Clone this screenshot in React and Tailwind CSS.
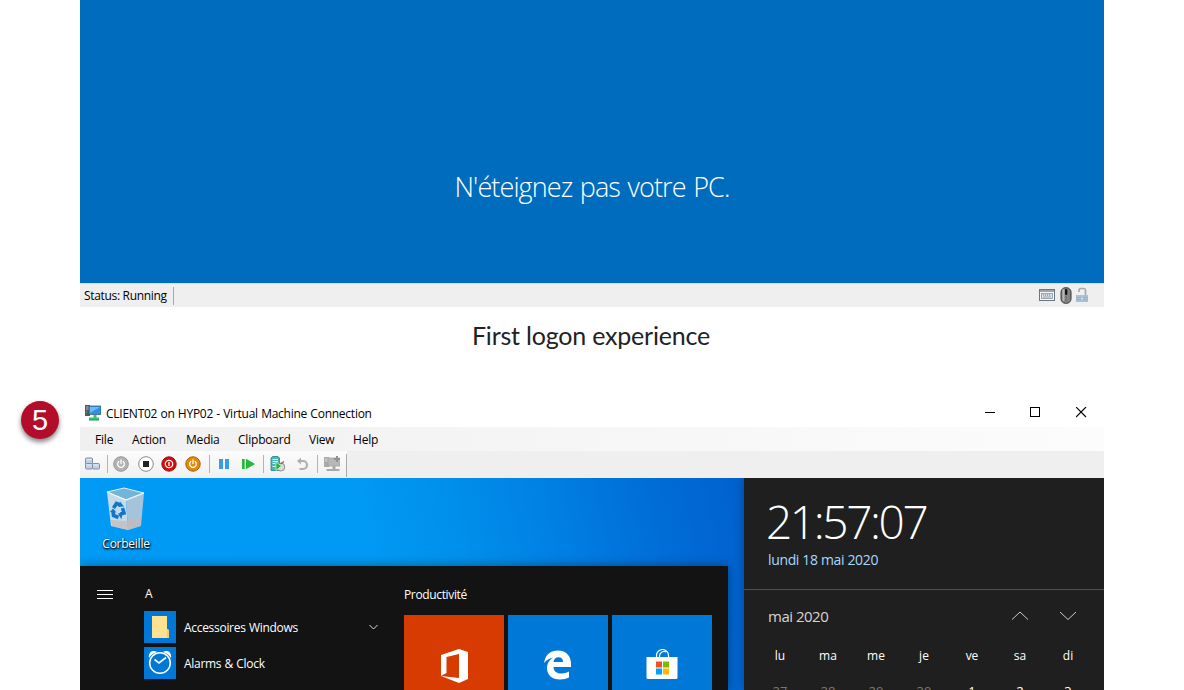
const MENU = [
  ['File', 'w-[37px]'],
  ['Action', 'w-[54px]'],
  ['Media', 'w-[52px]'],
  ['Clipboard', 'w-[71px]'],
  ['View', 'w-[44px]'],
  ['Help', 'w-[40px]'],
];

const DAYS = ['lu', 'ma', 'me', 'je', 've', 'sa', 'di'];
const DATES = [27, 28, 29, 30, 1, 2, 3];

function PowerGlyph() {
  return (
    <g fill="none" stroke="#fff" strokeWidth="1.3" strokeLinecap="round">
      <path d="M5.8 5.6a3.3 3.3 0 1 0 4.4 0" />
      <path d="M8 4v3.6" />
    </g>
  );
}

function Sep({ className }) {
  return <div className={`h-[18px] w-px shrink-0 bg-[#b4b4b4] ${className}`} />;
}

function Toolbar() {
  return (
    <div className="flex h-[27px] items-center bg-[#efefef]">
      <div className="flex h-full w-[267px] shrink-0 items-center bg-linear-to-b from-[#fcfcfc] to-[#f0f0f0] pb-px pl-[5px]">
        <svg className="h-4 w-4 shrink-0" viewBox="0 0 16 16">
          <g fill="#c3cfe2" stroke="#7f8da9">
            <rect x=".5" y="2" width="7" height="6" rx="1" />
            <rect x=".5" y="7.500" width="7" height="5.500" rx="1" />
            <rect x="7.500" y="7.500" width="7" height="5.500" rx="1" />
          </g>
          <path d="M1.500 3.500h5M1.500 9h5M8.500 9h5" stroke="#e7edf7" />
        </svg>
        <Sep className="ml-[6px]" />
        <svg className="ml-[5px] h-4 w-4 shrink-0" viewBox="0 0 16 16">
          <circle cx="8" cy="8" r="7.3" fill="#b3b3b3" stroke="#969696" />
          <PowerGlyph />
        </svg>
        <svg className="ml-[9px] h-4 w-4 shrink-0" viewBox="0 0 16 16">
          <circle cx="8" cy="8" r="7.3" fill="#fff" stroke="#8a8a8a" />
          <rect x="5" y="5" width="6" height="6" fill="#222" />
        </svg>
        <svg className="ml-[7px] h-4 w-4 shrink-0" viewBox="0 0 16 16">
          <circle cx="8" cy="8" r="7.2" fill="#d8090c" stroke="#8f1b16" />
          <circle cx="8" cy="8" r="3.7" fill="none" stroke="#fff" strokeWidth="1.3" />
          <path d="M8 6v4" stroke="#fff" strokeWidth="1.3" />
        </svg>
        <svg className="ml-2 h-4 w-4 shrink-0" viewBox="0 0 16 16">
          <circle cx="8" cy="8" r="7.2" fill="#e68a08" stroke="#9d5f12" />
          <PowerGlyph />
        </svg>
        <Sep className="ml-[8px]" />
        <svg className="ml-[6px] h-4 w-4 shrink-0" viewBox="0 0 16 16">
          <path d="M3 3h4v10H3zM9 3h4v10H9z" fill="#3a9be8" />
        </svg>
        <svg className="ml-2 h-4 w-4 shrink-0" viewBox="0 0 16 16">
          <path d="M2 3h2.700v10H2zM6 2.800v10.400L15 8z" fill="#25b83b" />
        </svg>
        <Sep className="ml-[7px]" />
        <svg className="ml-[6px] h-4 w-4 shrink-0" viewBox="0 0 16 16">
          <path d="M1 2l1.500-1.500H8L9.500 2v12.500H1z" fill="#4bb5bd" stroke="#23818b" strokeWidth=".8" />
          <path d="M2.500 3.500h5.500M2.500 5.500h5.500M2.500 7.500h3M2.500 10.500h3" stroke="#d8f5f6" />
          <circle cx="10.800" cy="11" r="4" fill="#d9dbd7" stroke="#777" strokeWidth=".8" />
          <path d="M10.500 8l3.500-2.500" stroke="#a55a4b" strokeWidth="1.200" />
          <path d="M6 6v8.500l5.500-4.500z" fill="#1fb53b" stroke="#f1fff1" strokeWidth=".6" />
        </svg>
        <svg className="ml-2 h-4 w-4 shrink-0" viewBox="0 0 16 16">
          <path d="M5 5h4a4 4 0 0 1 0 8H5.500" fill="none" stroke="#b0b0b0" strokeWidth="2.200" />
          <path d="M7 1.500v7L3 5z" fill="#b0b0b0" />
        </svg>
        <Sep className="ml-[7px]" />
        <svg className="ml-[6px] h-4 w-4 shrink-0" viewBox="0 0 16 16">
          <path d="M0 1h5v10H0z" fill="#aaa" />
          <path d="M1 3h3M1 5h3" stroke="#ddd" />
          <path d="M4 2h12v8H4z" fill="#b8b8b8" stroke="#9b9b9b" strokeWidth=".7" />
          <path d="M13 0v6M10 3h6" stroke="#929292" strokeWidth="2" />
          <path d="M8.500 10h3v3h4v2h-13v-2h6z" fill="#a9a9a9" />
        </svg>
        <div className="ml-[6px] h-[23px] w-px shrink-0 self-end bg-[#aaa]" />
      </div>
    </div>
  );
}

function TopWindow() {
  return (
    <div className="ml-20 w-[1024px]">
      <div className="h-[283px] bg-[#006cbe] pt-[169px] text-center text-[27px] leading-9 font-light tracking-[-0.9px] text-white [word-spacing:1.4px]">
        N'éteignez pas votre PC.
      </div>
      <div className="flex h-6 items-center border-t border-[#d9dee3] bg-[#efefef] pr-[15px] pl-1">
        <span className="w-[89px] pt-px text-[12px] tracking-[-0.32px] whitespace-nowrap text-black">
          Status: Running
        </span>
        <div className="h-[18px] w-px bg-[#a8a8a8]" />
        <div className="ml-auto flex items-center pb-px">
          <svg className="h-4 w-[17px]" viewBox="0 0 17 16">
            <rect x="1.500" y="2.500" width="15" height="11" fill="#f5f7f9" stroke="#697684" />
            <path d="M2 4h14" stroke="#7b8894" strokeWidth="1.500" />
            <rect x="3.500" y="6.500" width="11" height="5" fill="#d9dfe5" stroke="#8796a3" strokeWidth=".8" />
            <path d="M5 8h8M5.500 10h7" stroke="#677583" strokeDasharray="1 1" />
          </svg>
          <svg className="ml-[5px] h-[17px] w-3" viewBox="0 0 12 17">
            <rect x="1" y=".7" width="10" height="15.600" rx="4.500" fill="#858585" stroke="#333" />
            <rect x="2.500" y="2" width="2" height="12" rx="1" fill="#b8b8b8" />
            <rect x="5" y="2" width="2.300" height="6" rx="1" fill="#111" />
            <path d="M6 9v5" stroke="#666" />
          </svg>
          <svg className="ml-[3px] h-4 w-[14px]" viewBox="0 0 14 16">
            <path d="M4 5V3.500Q4 1.500 6 1.500h2.500q2 0 2 2V8" fill="none" stroke="#a3abb2" strokeWidth="1.700" />
            <rect x="1" y="8" width="12" height="7" fill="#a9c2d5" />
            <path d="M1 10.500h12M1 12.700h12" stroke="#8fa7b9" strokeWidth=".7" />
            <path d="M7 10v3" stroke="#e2edf5" />
          </svg>
        </div>
      </div>
    </div>
  );
}

function TitleBar() {
  return (
    <div className="flex h-[28px] items-center bg-white pl-[5px]">
      <svg className="h-4 w-4 shrink-0" viewBox="0 0 16 16">
        <path d="M0 0h5v11H0z" fill="#52595f" />
        <path d="M1 2h3M1 4h3" stroke="#b7bcc0" />
        <path d="M1 7h1" stroke="#55e25d" />
        <path d="M4 1h12v8.500H4z" fill="#2d91dc" stroke="#315474" strokeWidth=".7" />
        <path d="M5 2h10L5 8z" fill="#67bdf3" />
        <path d="M8.500 10h3v2.500H14V15H4v-2.500h4.500z" fill="#39c46a" />
        <path d="M4 15h10" stroke="#1c9b47" />
      </svg>
      <span className="ml-[5px] pt-px text-[12px] tracking-[-0.25px] whitespace-nowrap text-black [word-spacing:0.4px]">
        CLIENT02 on HYP02 - Virtual Machine Connection
      </span>
      <div className="ml-auto flex items-center gap-[35px] pr-[17px] pb-px">
        <svg className="h-[11px] w-[11px]" viewBox="0 0 11 11" shapeRendering="crispEdges">
          <path d="M1 5.500h10" stroke="#000" />
        </svg>
        <svg className="h-[11px] w-[11px]" viewBox="0 0 11 11" shapeRendering="crispEdges">
          <rect x=".5" y=".5" width="9" height="9" fill="none" stroke="#000" />
        </svg>
        <svg className="h-[11px] w-[11px]" viewBox="0 0 11 11">
          <path d="M0 0l10 10M10 0L0 10" stroke="#000" strokeWidth="1.150" />
        </svg>
      </div>
    </div>
  );
}

function RecycleBin() {
  return (
    <div className="flex w-[92px] flex-col items-center pt-[9px]">
      <svg className="h-[45px] w-[40px]" viewBox="0 0 40 45">
        <path d="M1 5L18 1l20 5-18 7z" fill="#73b4d9" stroke="#e7eef2" />
        <path d="M1 5l19 8 2 30-17-4z" fill="#c3dcec" />
        <path d="M20 13l18-7-3 33-13 4z" fill="#a5c3da" />
        <path d="M5 33l15 1 15-3-1 8-12 4-16-4z" fill="#c8b9b8" opacity=".75" />
        <path d="M1 5l19 8 18-7" fill="none" stroke="#f0f5f7" strokeWidth="1.200" />
        <g fill="none" stroke="#1475c9" strokeWidth="3.600">
          <path d="M7.500 21l3-4.500 4 1.500" />
          <path d="M16.500 21l1.500 5-3.500 1" />
          <path d="M12.500 30.500l-5-2-.5-4.500" />
        </g>
        <path d="M14 14.500l4 5-5.500.5zM12 26.500l4.500-1-1 7zM4 25l3-3.500 3.500 4z" fill="#1475c9" />
      </svg>
      <span className="mt-1 text-[12px] leading-4 tracking-[-0.25px] text-white [text-shadow:1px_1px_2px_#000,0_1px_2px_#000]">
        Corbeille
      </span>
    </div>
  );
}

function AppRow({ label, children, chevron }) {
  return (
    <div className="flex h-9 items-start">
      <svg className="h-8 w-8 shrink-0 bg-[#0078d7]" viewBox="0 0 32 32">
        {children}
      </svg>
      <span className="ml-2 pt-px text-[12px] leading-8 tracking-[-0.3px] whitespace-nowrap text-white [word-spacing:0.5px]">
        {label}
      </span>
      {chevron && (
        <svg className="mt-3 mr-[6px] ml-auto h-2 w-[9px]" viewBox="0 0 9 8">
          <path d="M.5 2l4 4 4-4" fill="none" stroke="#ddd" />
        </svg>
      )}
    </div>
  );
}

function StartMenu() {
  return (
    <div className="flex h-[124px] w-[648px] bg-[#131313] shadow-[0_0_10px_rgba(0,0,0,0.4)]">
      <div className="w-16 shrink-0 pt-[23px] pl-[17px]">
        <svg className="h-[11px] w-4" viewBox="0 0 16 11" shapeRendering="crispEdges">
          <path d="M0 1.500h16M0 5.500h16M0 9.500h16" stroke="#fff" />
        </svg>
      </div>
      <div className="w-[240px] shrink-0">
        <div className="h-[45px] pt-[20px] pl-[1px] text-[12px] leading-4 text-white">A</div>
        <AppRow label="Accessoires Windows" chevron>
          <path d="M8 5h15v13l2 1v8H8z" fill="#ffe291" />
          <path d="M23 18l2 1v8h-2z" fill="#f4ce6b" />
        </AppRow>
        <AppRow label="Alarms & Clock">
          <g fill="none" stroke="#fff">
            <circle cx="16" cy="16" r="10.300" strokeWidth="1.500" />
            <path d="M10.500 12.500l4.500 3.500 7-5.500" strokeWidth="1.600" />
          </g>
          <path d="M5 11c-.8-3.500 1-6.500 4-7 2 0 3 .3 4 1C9.500 6 7 8 5 11zM27 11c.8-3.500-1-6.500-4-7-2 0-3 .3-4 1 3.500 1 6 3 8 6z" fill="#fff" />
        </AppRow>
      </div>
      <div className="ml-5">
        <div className="h-[49px] pt-[21px] text-[12px] leading-4 tracking-[-0.35px] text-white">Productivité</div>
        <div className="flex gap-1">
          <div className="flex h-[75px] w-[100px] justify-center bg-[#d83b01] pt-[33px] pl-[2px]">
            <svg className="h-9 w-[30px]" viewBox="0 0 30 36">
              <path d="M1 7L19 1l9 3v27l-9 4L1 28l18 2V6L6.500 9v16L1 28z" fill="#fff" />
            </svg>
          </div>
          <div className="flex h-[75px] w-[100px] justify-center bg-[#0078d7] pt-[35px]">
            <svg className="h-[30px] w-[28px]" viewBox="0 0 28 30">
              <path d="M0 13C1.500 4 7 .5 14 .5c8.500 0 13 6 13 13V17H9.500c.3 5 4 6.500 8 6.500 3 0 5.500-.8 7.500-2v6C22.500 28.800 19.500 29.500 16 29.500 8 29.500 3 25 3 18c0-4.500 2.500-8.500 6.500-10.500C5.500 8.200 2.300 10 0 13zm9.500-1H19c0-3-1.500-4.700-4.500-4.700S10 9 9.500 12z" fill="#fff" />
            </svg>
          </div>
          <div className="flex h-[75px] w-[100px] justify-center bg-[#0078d7] pt-[34px]">
            <svg className="h-[31px] w-[32px]" viewBox="0 0 32 31">
              <path d="M10.500 9V6.500a6 6 0 0 1 12 0V9M13.500 9V7a4.500 4.500 0 0 1 6.500-4" fill="none" stroke="#fff" strokeWidth="1.200" />
              <path d="M.5 8h31v20.500a1.500 1.500 0 0 1-1.500 1.500H2a1.500 1.500 0 0 1-1.500-1.500z" fill="#fff" />
              <path d="M10 12.500h6v6h-6z" fill="#f25022" />
              <path d="M17 12.500h6v6h-6z" fill="#7fba00" />
              <path d="M10 19.500h6v6h-6z" fill="#00a4ef" />
              <path d="M17 19.500h6v6h-6z" fill="#ffb900" />
            </svg>
          </div>
        </div>
      </div>
    </div>
  );
}

function ClockPanel() {
  return (
    <div className="h-[212px] w-[360px] shrink-0 overflow-hidden bg-[#1f1f1f] shadow-[0_0_10px_rgba(0,0,0,0.3)]">
      <div className="h-[112px] border-b border-[#505050] pl-6">
        <div className="-ml-[2px] pt-[17px] text-[46px] leading-[52px] font-light tracking-[-2.4px] whitespace-nowrap text-white">
          21:57:07
        </div>
        <div className="mt-[3px] text-[14px] leading-5 tracking-[-0.35px] text-[#a6d8ff]">lundi 18 mai 2020</div>
      </div>
      <div className="flex h-[52px] items-center pr-7 pl-6">
        <span className="text-[15px] tracking-[-0.5px] text-[#d5d5d5]">mai 2020</span>
        <svg className="ml-auto h-[10px] w-4" viewBox="0 0 16 10">
          <path d="M0 8.500l8-7.500 8 7.500" fill="none" stroke="#ccc" />
        </svg>
        <svg className="ml-8 h-[10px] w-4" viewBox="0 0 16 10">
          <path d="M0 1l8 7.500L16 1" fill="none" stroke="#ccc" />
        </svg>
      </div>
      <div className="grid w-[348px] grid-cols-[repeat(7,48px)] pt-[2px] pl-3 text-center text-[12px] leading-6 text-white">
        {DAYS.map((d) => (
          <span key={d}>{d}</span>
        ))}
      </div>
      <div className="mt-[14px] grid w-[348px] grid-cols-[repeat(7,48px)] pl-3 text-center text-[13px] leading-[18px]">
        {DATES.map((d) => (
          <span key={d} className={d > 20 ? 'text-[#777]' : 'text-white'}>
            {d}
          </span>
        ))}
      </div>
    </div>
  );
}

export default function App() {
  return (
    <div className="h-[690px] w-[1184px] overflow-hidden bg-white font-['Open_Sans','Noto_Sans',sans-serif]">
      <TopWindow />
      <div className="ml-20 h-[92px] w-[1022px] pt-[10px] text-center font-['Lato',sans-serif] text-[25px] leading-9 tracking-[-0.2px] text-[#222]">
        First logon experience
      </div>
      <div className="flex">
        <div className="w-20 shrink-0 pt-[2px] pl-[21px]">
          <div className="flex h-[38px] w-[38px] items-center justify-center rounded-full bg-[#b30d2b] font-['Liberation_Sans',sans-serif] text-[29px] leading-none text-white shadow-[0_3px_5px_rgba(0,0,0,0.5)]">
            5
          </div>
        </div>
        <div className="w-[1024px] shrink-0">
          <TitleBar />
          <div className="flex h-6 items-center bg-linear-to-r from-[#f0f0f0] to-[#fcfcfc] pt-px pl-[15px] text-[12px] tracking-[-0.2px] text-black">
            {MENU.map(([label, width]) => (
              <span key={label} className={width}>
                {label}
              </span>
            ))}
          </div>
          <Toolbar />
          <div className="flex h-[212px] overflow-hidden bg-[linear-gradient(78deg,#009bf6_0%,#0099f3_30%,#0090ec_38%,#007fe2_48%,#006cd6_58%,#005ecd_68%)]">
            <div className="w-[664px] shrink-0">
              <div className="h-[88px]">
                <RecycleBin />
              </div>
              <StartMenu />
            </div>
            <ClockPanel />
          </div>
        </div>
      </div>
    </div>
  );
}
